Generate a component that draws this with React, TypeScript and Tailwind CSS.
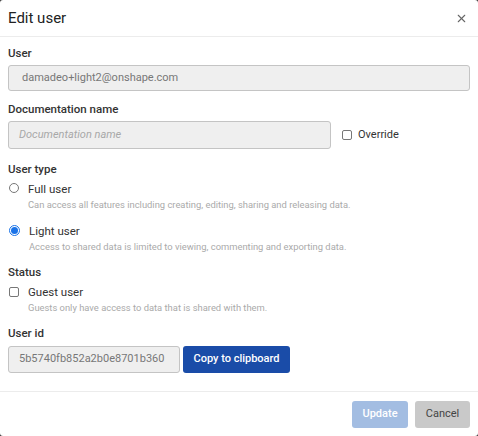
import { X } from "lucide-react"

export default function App() {
  return (
    <div className="w-[478px] h-[436px] bg-[#3a3a3a] font-['Roboto',sans-serif]">
      <div className="w-full h-full bg-white rounded-[3px] flex flex-col">
        {/* Header */}
        <div className="h-[37px] flex items-center justify-between pl-[8px] pr-[10px] border-b border-[#ececec]">
          <h1 className="text-[15px] text-[#222]">Edit user</h1>
          <X className="w-[13px] h-[13px] text-[#666]" strokeWidth={2} />
        </div>

        {/* Body */}
        <div className="flex-1 px-[8px] pt-[8px]">
          <label className="block text-[11.5px] font-medium text-[#333] leading-[16px]">User</label>
          <div className="mt-[4px] h-[26px] w-[462px] bg-[#efefef] border border-[#c4c4c4] rounded-[3px] flex items-center px-[13px] text-[11px] text-[#777]">
            damadeo+light2@onshape.com
          </div>

          <label className="block mt-[10px] text-[11.5px] font-medium text-[#333] leading-[16px]">Documentation name</label>
          <div className="mt-[4px] flex items-center">
            <div className="h-[28px] w-[323px] bg-[#efefef] border border-[#c4c4c4] rounded-[3px] flex items-center px-[10px] text-[11px] italic text-[#a8a8a8]">
              Documentation name
            </div>
            <span className="ml-[11px] w-[10px] h-[10px] border border-[#777] rounded-[2px]" />
            <span className="ml-[6px] text-[11px] text-[#333]">Override</span>
          </div>

          <label className="block mt-[12px] text-[11.5px] font-medium text-[#333] leading-[16px]">User type</label>
          <div className="mt-[4px] flex gap-[9px]">
            <span className="mt-[2px] ml-[1px] w-[10px] h-[10px] rounded-full border border-[#777]" />
            <div>
              <div className="text-[11.5px] text-[#333] leading-[16px]">Full user</div>
              <div className="mt-[1px] text-[9.4px] text-[#aaa] leading-[13px]">Can access all features including creating, editing, sharing and releasing data.</div>
            </div>
          </div>
          <div className="mt-[12px] flex gap-[9px]">
            <span className="mt-[2px] ml-[1px] w-[11px] h-[11px] rounded-full border border-[#1a73e8] flex items-center justify-center">
              <span className="w-[7px] h-[7px] rounded-full bg-[#1a73e8]" />
            </span>
            <div>
              <div className="text-[11.5px] text-[#333] leading-[16px]">Light user</div>
              <div className="mt-[1px] text-[9.4px] text-[#aaa] leading-[13px]">Access to shared data is limited to viewing, commenting and exporting data.</div>
            </div>
          </div>

          <label className="block mt-[11px] text-[11.5px] font-medium text-[#333] leading-[16px]">Status</label>
          <div className="mt-[4px] flex gap-[9px]">
            <span className="mt-[3px] ml-[1px] w-[10px] h-[10px] border border-[#777] rounded-[2px]" />
            <div>
              <div className="text-[11.5px] text-[#333] leading-[16px]">Guest user</div>
              <div className="mt-[1px] text-[9.4px] text-[#aaa] leading-[13px]">Guests only have access to data that is shared with them.</div>
            </div>
          </div>

          <label className="block mt-[11px] text-[11.5px] font-medium text-[#333] leading-[16px]">User id</label>
          <div className="mt-[5px] flex items-center gap-[3px]">
            <div className="h-[27px] w-[172px] bg-[#efefef] border border-[#c4c4c4] rounded-[3px] flex items-center px-[10px] text-[11px] text-[#777]">
              5b5740fb852a2b0e8701b360
            </div>
            <button className="h-[27px] w-[107px] bg-[#1a4ca8] rounded-[3px] text-[11px] font-medium text-white">
              Copy to clipboard
            </button>
          </div>
        </div>

        {/* Footer */}
        <div className="h-[45px] border-t border-[#ececec] flex items-center justify-end gap-[7px] pr-[8px]">
          <button className="h-[27px] w-[56px] bg-[#a3bde2] rounded-[3px] text-[11px] font-medium text-white">Update</button>
          <button className="h-[27px] w-[55px] bg-[#c9c9c9] rounded-[3px] text-[11px] text-[#444]">Cancel</button>
        </div>
      </div>
    </div>
  )
}
